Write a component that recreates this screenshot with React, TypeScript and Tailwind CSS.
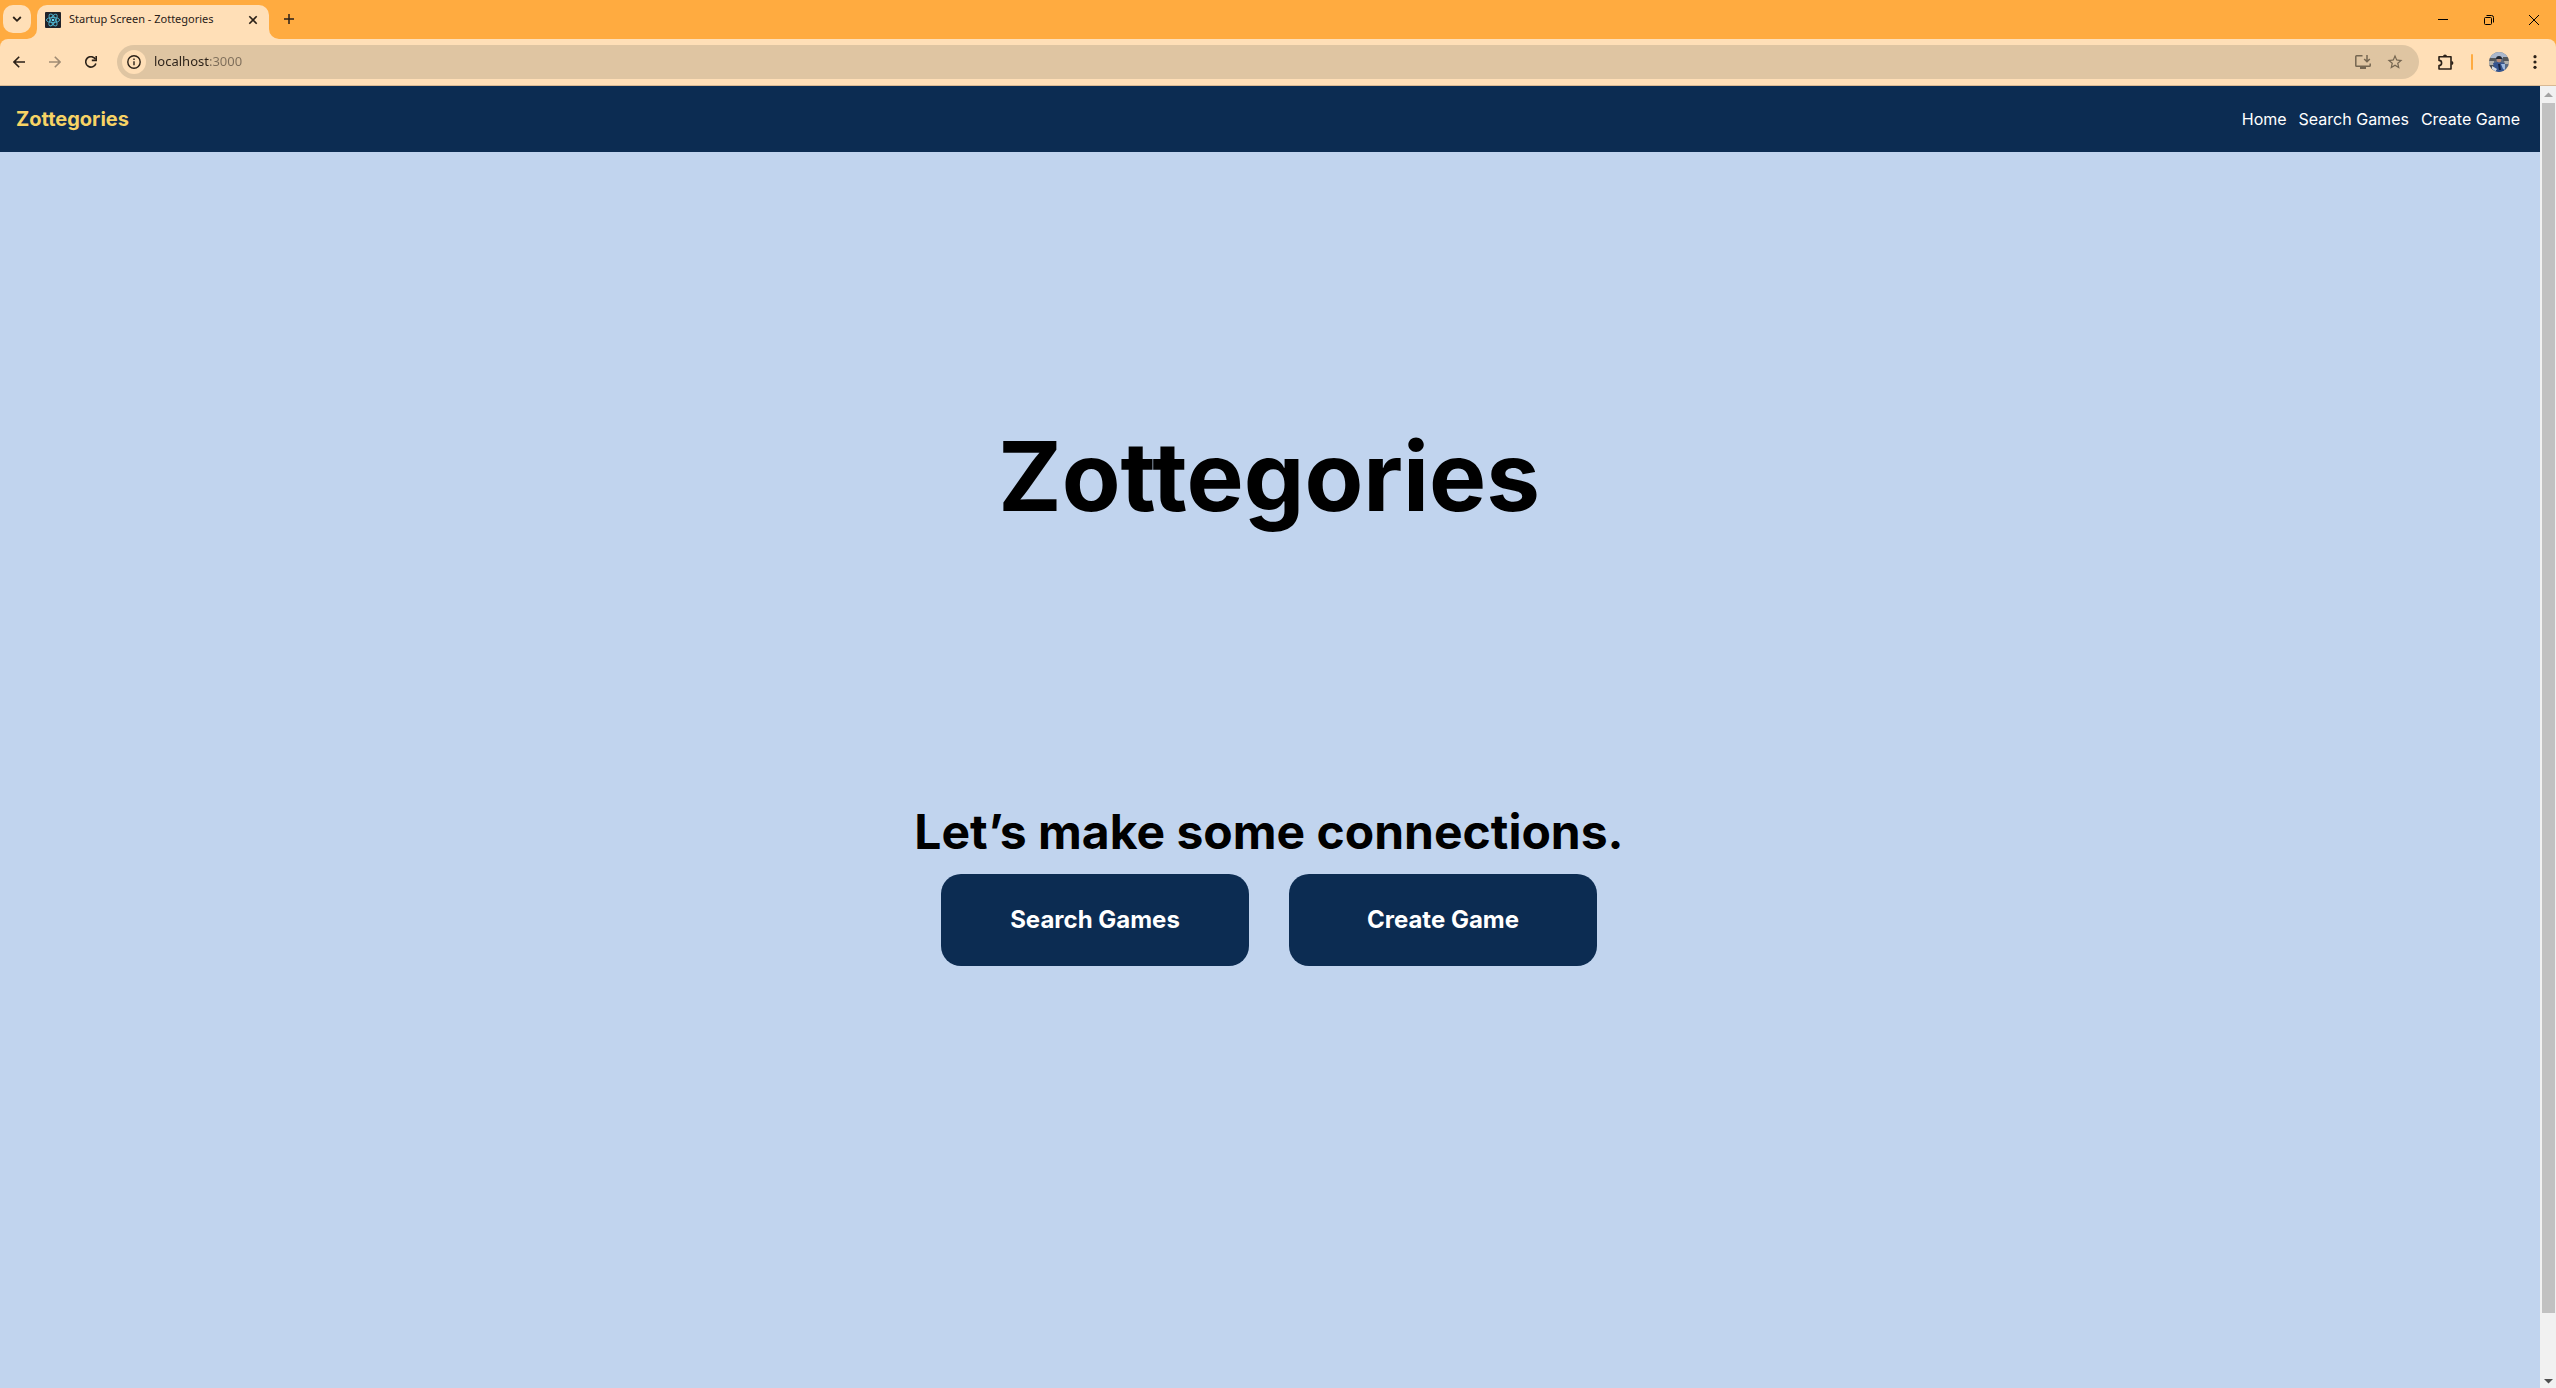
import type { ReactNode } from "react";

function IconButton({ label, className, children }: { label: string; className: string; children: ReactNode }) {
  return (
    <button type="button" aria-label={label} className={`flex shrink-0 items-center justify-center ${className}`}>
      {children}
    </button>
  );
}

function Flare({ className }: { className: string }) {
  return (
    <svg aria-hidden="true" viewBox="0 0 10 10" className={`size-[10px] self-end text-[#ffdfb7] ${className}`}>
      <path d="M0 10A10 10 0 0 0 10 0V10Z" fill="currentColor" />
    </svg>
  );
}

function ReactFavicon() {
  return (
    <svg aria-hidden="true" viewBox="0 0 16 16" className="size-4 shrink-0">
      <rect width="16" height="16" rx="1" fill="#20232a" />
      <g fill="none" stroke="#4fb4cf" strokeWidth="0.9">
        <ellipse cx="8" cy="8" rx="6.6" ry="2.6" />
        <ellipse cx="8" cy="8" rx="6.6" ry="2.6" transform="rotate(60 8 8)" />
        <ellipse cx="8" cy="8" rx="6.6" ry="2.6" transform="rotate(120 8 8)" />
      </g>
      <circle cx="8" cy="8" r="1.3" fill="#61dafb" />
    </svg>
  );
}

function Avatar() {
  return (
    <svg aria-hidden="true" viewBox="0 0 20 20" className="size-5">
      <defs>
        <clipPath id="avatar-clip">
          <circle cx="10" cy="10" r="10" />
        </clipPath>
      </defs>
      <g clipPath="url(#avatar-clip)">
        <rect width="20" height="20" fill="#5d6b80" />
        <rect width="20" height="6" fill="#aab7cc" />
        <path d="M0 6H7V9H0ZM14 5H20V9H14Z" fill="#55585c" />
        <path d="M0 9H5V13H0ZM15 9H20V12H16Z" fill="#b3b1ab" />
        <path d="M0 13H6V20H0Z" fill="#4b4f55" />
        <path d="M4 11L9 10L15 11L17 20H6Z" fill="#35548f" />
        <path d="M3 14L8 17L6 20H3Z" fill="#d5dae2" />
        <path d="M12 12L16 12L16 18L14 17Z" fill="#9db9e0" />
        <circle cx="10" cy="8" r="2.4" fill="#b98c78" />
        <path d="M7 7A3 3 0 0 1 13 7Z" fill="#1e2430" />
        <path d="M9 12L11 12L12 18H10Z" fill="#16233f" />
      </g>
    </svg>
  );
}

function TabStrip() {
  return (
    <div className="flex h-[39px] items-stretch justify-between bg-[#ffab40]">
      <div className="flex items-stretch">
        <IconButton label="Search tabs" className="mt-[5px] ml-[3px] size-7 rounded-[10px] bg-[#ffdfb7] text-[#2b2118]">
          <svg viewBox="0 0 10 10" className="size-[10px]" fill="none" stroke="currentColor" strokeWidth="1.8">
            <path d="M1.2 3L5 6.8L8.8 3" />
          </svg>
        </IconButton>
        <div className="-ml-1 flex">
          <Flare className="" />
          <div role="tab" aria-selected="true" className="mt-[5px] flex w-[232px] items-center rounded-t-[10px] bg-[#ffdfb7] pr-[10px] pb-[5px] pl-2">
            <ReactFavicon />
            <span className="ml-2 flex-1 whitespace-nowrap font-['Noto_Sans',sans-serif] text-[11px] text-[#2b2118]">
              Startup Screen - Zottegories
            </span>
            <IconButton label="Close tab" className="size-3 text-[#2b2118]">
              <svg viewBox="0 0 10 10" className="size-[10px]" fill="none" stroke="currentColor" strokeWidth="1.6">
                <path d="M1.3 1.3L8.7 8.7M8.7 1.3L1.3 8.7" />
              </svg>
            </IconButton>
          </div>
          <Flare className="-scale-x-100" />
        </div>
        <IconButton label="New tab" className="mt-[5px] -ml-1 size-7 text-[#2b2118]">
          <svg viewBox="0 0 10 10" className="size-[10px]" fill="none" stroke="currentColor" strokeWidth="1.5">
            <path d="M5 0V10M0 5H10" />
          </svg>
        </IconButton>
      </div>
      <div className="flex text-black">
        <IconButton label="Minimize" className="w-[46px]">
          <svg viewBox="0 0 10 10" className="size-[10px]" stroke="currentColor">
            <path d="M0 4.5H10" />
          </svg>
        </IconButton>
        <IconButton label="Restore" className="w-[46px]">
          <svg viewBox="0 0 10 10" className="size-[10px]" fill="none" stroke="currentColor">
            <rect x="0.5" y="2.5" width="7" height="7" rx="1" />
            <path d="M2.5 0.5H7.5A2 2 0 0 1 9.5 2.5V7.5" />
          </svg>
        </IconButton>
        <IconButton label="Close window" className="w-11">
          <svg viewBox="0 0 10 10" className="size-[10px]" stroke="currentColor">
            <path d="M0 0L10 10M10 0L0 10" />
          </svg>
        </IconButton>
      </div>
    </div>
  );
}

function Toolbar() {
  return (
    <div className="bg-[#ffab40]">
      <div className="flex h-[47px] items-center rounded-t-lg border-b border-[#d9b994] bg-[#ffdfb7] pr-[7px] pl-[5px] text-[#2b2118]">
        <IconButton label="Back" className="size-7">
          <svg viewBox="0 0 12 12" className="size-3" fill="none" stroke="currentColor" strokeWidth="1.6">
            <path d="M12 6H1.2M6.2 0.8L1 6L6.2 11.2" />
          </svg>
        </IconButton>
        <IconButton label="Forward" className="ml-2 size-7 text-[#a08c74]">
          <svg viewBox="0 0 12 12" className="size-3" fill="none" stroke="currentColor" strokeWidth="1.6">
            <path d="M0 6H10.8M5.8 0.8L11 6L5.8 11.2" />
          </svg>
        </IconButton>
        <IconButton label="Reload" className="ml-2 size-7">
          <svg viewBox="0 0 12 12" className="size-3" fill="none" stroke="currentColor" strokeWidth="1.6">
            <path d="M10.9 7.4A5.2 5.2 0 1 1 10.4 3.2" />
            <path d="M11.2 0V4.4H6.8" />
          </svg>
        </IconButton>
        <div className="ml-3 flex h-[34px] flex-1 items-center rounded-full bg-[#dfc5a2] pr-3 pl-[5px]">
          <IconButton label="View site information" className="size-6 rounded-full bg-[#ffdfb7]">
            <svg viewBox="0 0 14 14" className="size-[14px]" fill="none" stroke="currentColor" strokeWidth="1.4">
              <circle cx="7" cy="7" r="6.2" />
              <path d="M7 6.2V10.2M7 3.6V5" />
            </svg>
          </IconButton>
          <input
            type="text"
            aria-label="Address"
            defaultValue="localhost:3000"
            className="ml-2 min-w-0 flex-1 bg-linear-to-r from-[#2b2118] from-[55px] to-[#7d6d59] to-[55px] bg-clip-text font-['Noto_Sans',sans-serif] text-[13px] text-transparent outline-none"
          />
          <IconButton label="Install app" className="size-8 text-[#756651]">
            <svg viewBox="0 0 16 14" className="h-[14px] w-4" fill="none" stroke="currentColor" strokeWidth="1.5">
              <path d="M7.5 0.8H1.6Q0.8 0.8 0.8 1.6V10.4Q0.8 11.2 1.6 11.2H14.4Q15.2 11.2 15.2 10.4V8.6" />
              <path d="M12 0V6.4M9.2 4L12 6.8L14.8 4" />
              <path d="M5 13H11" strokeWidth="2" />
            </svg>
          </IconButton>
          <IconButton label="Bookmark this tab" className="-mr-1 size-8 text-[#756651]">
            <svg viewBox="0 0 24 24" className="size-[18px]" fill="currentColor">
              <path d="M22 9.24l-7.19-.62L12 2 9.19 8.63 2 9.24l5.46 4.73L5.82 21 12 17.27 18.18 21l-1.63-7.03L22 9.24zM12 15.4l-3.76 2.27 1-4.28-3.32-2.88 4.38-.38L12 6.1l1.71 4.04 4.38.38-3.32 2.88 1 4.28L12 15.4z" />
            </svg>
          </IconButton>
        </div>
        <IconButton label="Extensions" className="ml-3 size-7">
          <svg viewBox="0 0 17 16" className="h-4 w-[17px]" fill="none" stroke="currentColor" strokeWidth="1.6" strokeLinejoin="round">
            <path d="M2 2.8H14V15H2V11.6A2.6 2.6 0 0 0 2 6.4Z" />
            <path d="M6 2.4A2 2 0 0 1 10 2.4ZM14.4 6.9A2 2 0 0 1 14.4 10.9Z" fill="currentColor" stroke="none" />
          </svg>
        </IconButton>
        <div className="ml-3 h-4 w-[2px] rounded-full bg-[#ffab40]" />
        <IconButton label="Profile" className="ml-3 size-7">
          <Avatar />
        </IconButton>
        <IconButton label="Browser menu" className="ml-2 w-7">
          <svg viewBox="0 0 4 14" className="h-[14px] w-1" fill="currentColor">
            <circle cx="2" cy="1.7" r="1.6" />
            <circle cx="2" cy="7" r="1.6" />
            <circle cx="2" cy="12.3" r="1.6" />
          </svg>
        </IconButton>
      </div>
    </div>
  );
}

function Scrollbar() {
  return (
    <div aria-hidden="true" className="flex w-4 shrink-0 flex-col items-center bg-[#f1f1f1]">
      <svg viewBox="0 0 16 17" className="h-[17px] w-4">
        <path d="M4 11L8.5 6.5L13 11Z" fill="#a3a3a3" />
      </svg>
      <div className="ml-px w-[13px] flex-1 bg-[#c1c1c1]" />
      <div className="h-[58px]" />
      <svg viewBox="0 0 16 17" className="h-[17px] w-4">
        <path d="M4 8L8.5 12.5L13 8Z" fill="#505050" />
      </svg>
    </div>
  );
}

export default function App() {
  return (
    <div className="flex h-screen flex-col overflow-hidden">
      <TabStrip />
      <Toolbar />
      <div className="flex min-h-0 flex-1">
        <div className="min-w-0 flex-1 bg-[#c1d4ee] font-[Inter,sans-serif] text-black">
          <nav className="flex h-[66px] items-center justify-between bg-[#0c2c52] pr-5 pl-4">
            <a href="#home" className="text-xl font-bold text-[#f7d365]">
              Zottegories
            </a>
            <div className="flex gap-3 text-base text-white">
              <a href="#home">Home</a>
              <a href="#search">Search Games</a>
              <a href="#create">Create Game</a>
            </div>
          </nav>
          <main className="flex flex-col items-center pt-[276px] pr-[2px]">
            <h1 className="text-8xl font-bold">Zottegories</h1>
            <h2 className="mt-[276px] text-5xl leading-[64px] font-bold">Let’s make some connections.</h2>
            <div className="mt-[10px] flex gap-10">
              <button type="button" className="h-[92px] w-[308px] rounded-[20px] bg-[#0c2c52] text-2xl font-bold text-white">
                Search Games
              </button>
              <button type="button" className="h-[92px] w-[308px] rounded-[20px] bg-[#0c2c52] text-2xl font-bold text-white">
                Create Game
              </button>
            </div>
          </main>
        </div>
        <Scrollbar />
      </div>
    </div>
  );
}
